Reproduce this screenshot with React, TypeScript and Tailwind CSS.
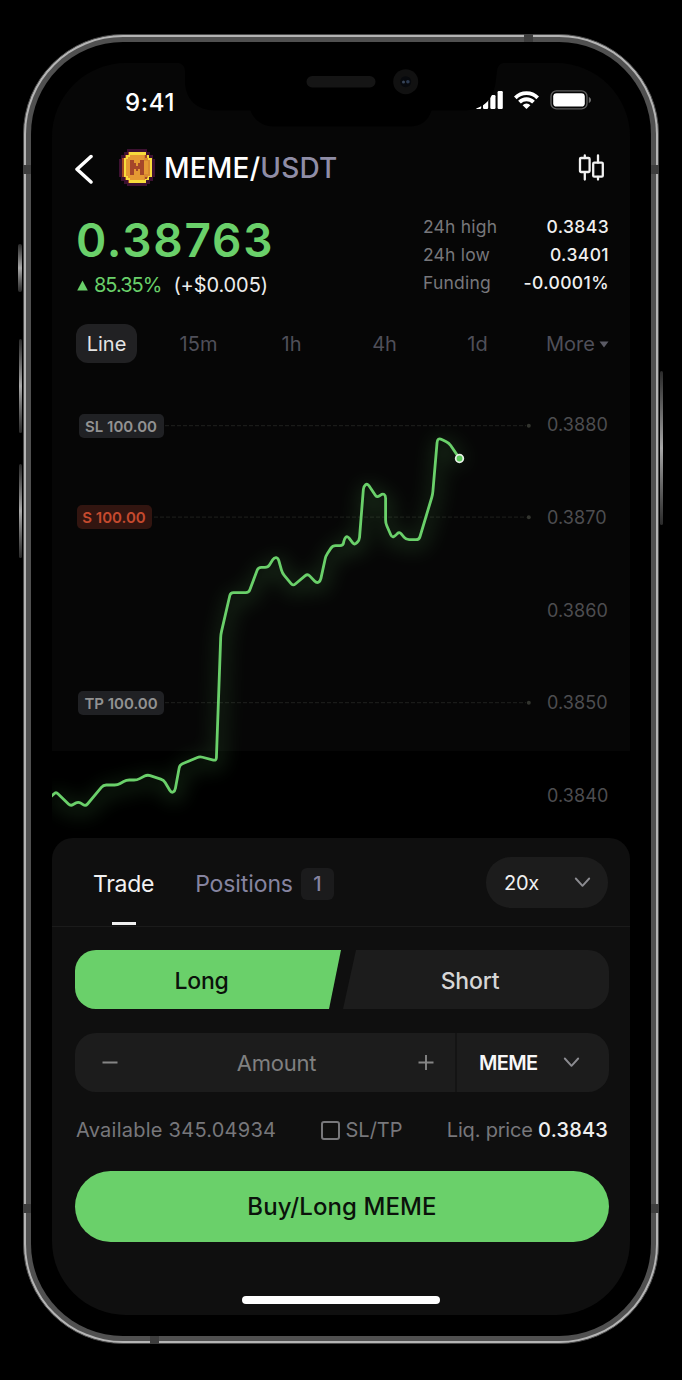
import React, { useState } from 'react'

const GREEN = '#6ad06a'

const stats = [
  { label: '24h high', value: '0.3843' },
  { label: '24h low', value: '0.3401' },
  { label: 'Funding', value: '-0.0001%' },
]

const intervals = ['15m', '1h', '4h', '1d']

const axisLabels = ['0.3880', '0.3870', '0.3860', '0.3850', '0.3840']

// chart points, x from the left edge of the screen, y from the top of the chart
const points = [
  [-2, 417], [3.7, 411.5], [18.3, 425.8], [26, 421.2], [33.3, 426], [51, 404.7], [65.3, 404.7],
  [74, 399.7], [84.7, 399.7], [95, 394.4], [111.3, 399.7], [119, 412.5], [122.6, 411], [127.4, 384.7],
  [147.3, 376.2], [164, 380.5], [168.5, 254.3], [178.2, 212.3], [196.5, 212.3], [206, 187], [215.7, 187],
  [222, 177], [225.7, 177.5], [230, 192.7], [240.7, 205.6], [255.3, 193.4], [264.3, 202.8], [268, 201],
  [273.5, 175.7], [280.3, 165.3], [290.8, 165.3], [292, 158.3], [295, 155.5], [302, 164.8], [307, 160],
  [311.3, 106], [315, 103], [324.7, 117.4], [330.3, 113.2], [333.3, 115], [333.3, 142.7], [339.5, 157],
  [342.5, 156], [347, 151.3], [353.8, 159.3], [366.8, 159.3], [380.3, 114.3], [385, 59.5], [387.3, 58],
  [396.7, 62.7], [407.3, 78.3],
]

// polyline with softened corners
function linePath(pts, radius = 3) {
  let d = `M${pts[0][0]} ${pts[0][1]}`
  for (let i = 1; i < pts.length - 1; i++) {
    const [x, y] = pts[i]
    const [px, py] = pts[i - 1]
    const [nx, ny] = pts[i + 1]
    const a = Math.hypot(px - x, py - y)
    const b = Math.hypot(nx - x, ny - y)
    const ra = Math.min(radius, a / 2) / a
    const rb = Math.min(radius, b / 2) / b
    d += `L${x + (px - x) * ra} ${y + (py - y) * ra}Q${x} ${y} ${x + (nx - x) * rb} ${y + (ny - y) * rb}`
  }
  const last = pts[pts.length - 1]
  return d + `L${last[0]} ${last[1]}`
}

function Chevron() {
  return (
    <svg className="shrink-0" width="17" height="11" viewBox="0 0 17 11" fill="none" stroke="#8b8b90" strokeWidth="1.9" strokeLinecap="round" strokeLinejoin="round">
      <path d="M1.8 1.5L8.5 8.8L15.2 1.5" />
    </svg>
  )
}

function Coin() {
  return (
    <svg width="36" height="37" viewBox="0 0 36 37">
      <path fill="#3c1131" d="M8 0H28V3H31V6H34V10H36V28H34V32H31V35H28V37H8V35H5V32H2V28H0V10H2V6H5V3H8Z" />
      <path fill="#a44a22" d="M9 3H27V6H30V9H33V28H30V31H27V34H9V31H6V28H3V9H6V6H9Z" />
      <path fill="#f7dc3c" d="M10 3H27V6H30V9H33V28H30V31H27V34H10V31H7V28H5V9H7V6H10Z" />
      <path fill="#d98a30" d="M11 6H26V9H29V11H31V27H29V29H26V31H11V29H9V27H7V10H9V8H11Z" />
      <path fill="#e59a33" d="M11 6H25V31H11V29H9V27H7V10H9V8H11Z" />
      <path fill="#e59a33" d="M25 12H29V25H25Z" />
      <path fill="#a5472a" d="M11 11H15V14H17V17H19V14H21V11H25V26H21V20H19V22H17V20H15V26H11Z" />
      <path fill="#a5472a" d="M26 6H28V9H26ZM26 28H28V30H26Z" />
    </svg>
  )
}

function StatusBar() {
  return (
    <div className="flex h-[77px] shrink-0 justify-between pl-[73px] pr-[39px] pt-[24px]">
      <span className="h-[30px] text-[24px] font-medium leading-[31px] tracking-[0.7px] text-white">9:41</span>
      <div className="flex h-[26px] items-center gap-[11px]">
        <svg width="27" height="18" viewBox="0 0 27 18" fill="#fff">
          <rect x="0" y="12" width="5.2" height="6" rx="1.2" />
          <rect x="7" y="8" width="5.2" height="10" rx="1.2" />
          <rect x="14.3" y="4" width="5.2" height="14" rx="1.2" />
          <rect x="21.6" y="0" width="5.2" height="18" rx="1.2" />
        </svg>
        <svg width="25" height="18" viewBox="0 0 25 18" fill="none" stroke="#fff" strokeWidth="3.8">
          <path d="M1.3 6.8A15.8 15.8 0 0 1 23.7 6.8" />
          <path d="M5.5 11.2A9.8 9.8 0 0 1 19.5 11.2" />
          <path d="M8.6 14.2A5.4 5.4 0 0 1 16.4 14.2L12.5 18Z" fill="#fff" stroke="none" />
        </svg>
        <svg width="41" height="20" viewBox="0 0 41 20">
          <rect x="1" y="0.9" width="36" height="18" rx="5.5" fill="none" stroke="#5c5c5c" strokeWidth="1.4" />
          <rect x="3.2" y="3.2" width="31.6" height="13.4" rx="3.4" fill="#fff" />
          <path d="M38.8 7V13C40.2 12.4 41 11.3 41 10S40.2 7.6 38.8 7Z" fill="#6b6b6b" />
        </svg>
      </div>
    </div>
  )
}

function Notch() {
  return (
    <svg className="pointer-events-none absolute left-0 top-0" width="578" height="66" viewBox="0 0 578 66">
      <path fill="#000" d="M127 0C131 1 133 4 133 9V20C134 36 144 47.5 164 47.5H198.500C201 55 209 63.500 222 63.500H357C369 63.500 376 58 379.500 47.500H410C430 47.500 441 38 443.500 20L445 8C445.500 4 447 1 451 0Z" />
      <rect x="254.500" y="13" width="69" height="11.500" rx="5.700" fill="#151515" />
      <circle cx="353.700" cy="18.700" r="12.500" fill="#111111" />
      <circle cx="353.700" cy="18.700" r="5.500" fill="#07090d" />
      <circle cx="351.500" cy="18.900" r="1.500" fill="#39465a" />
      <circle cx="355.900" cy="18.700" r="1.800" fill="#2c3a50" />
    </svg>
  )
}

function Header() {
  return (
    <div className="flex h-[56px] shrink-0 items-center pl-[22px] pr-[25px]">
      <svg width="19" height="31" viewBox="0 0 19 31" fill="none" stroke="#fff" strokeWidth="3.5" strokeLinecap="round" strokeLinejoin="round">
        <path d="M17 3.500L3 16.300L17 29" />
      </svg>
      <div className="ml-[26px] mt-[-1px]"><Coin /></div>
      <h1 className="ml-[9px] text-[28px] font-medium leading-[34px] tracking-[0.2px] text-white">
        MEME/<span className="text-[#8f8da6]">USDT</span>
      </h1>
      <svg className="ml-auto" width="27" height="28" viewBox="0 0 27 28" fill="none" stroke="#f2f2f2" strokeWidth="2.300" strokeLinecap="round">
        <rect x="2" y="4" width="9.600" height="14" rx="1" />
        <path d="M6.800 1.500V4M6.800 18.500V25.500" />
        <rect x="15.200" y="8.700" width="9.600" height="14" rx="1" />
        <path d="M20 1.500V8.500M20 23V25.500" />
      </svg>
    </div>
  )
}

function Price() {
  return (
    <div className="flex h-[128px] shrink-0 justify-between pl-[24px] pr-[21px] pt-[16px]">
      <div>
        <div className="text-[46px] font-semibold leading-[56px] tracking-[1.8px] text-[#6ad06a]">0.38763</div>
        <div className="flex h-[34px] items-center pl-[1px] text-[20px] leading-[34px]">
          <svg width="11" height="11" viewBox="0 0 11 11"><path d="M5.500 0.500L10.800 10.500H0.200Z" fill={GREEN} /></svg>
          <span className="ml-[6px] tracking-[-1px] text-[#6ad06a]">85.35%</span>
          <span className="ml-[12px] tracking-[-0.1px] text-[#ececec]">(+$0.005)</span>
        </div>
      </div>
      <dl className="mt-[1px] w-[186px] text-[17.500px] leading-[28px]">
        {stats.map(s => (
          <div key={s.label} className="flex justify-between">
            <dt className="tracking-[0.2px] text-[#77777b]">{s.label}</dt>
            <dd className="font-medium tracking-[0.4px] text-[#f0f0f0]">{s.value}</dd>
          </div>
        ))}
      </dl>
    </div>
  )
}

function Intervals() {
  return (
    <div className="flex h-[39px] shrink-0 items-center pl-[24px] text-[20px] text-[#4f4f59]">
      <button className="mr-[15px] h-[39px] w-[61px] rounded-[12px] bg-[#212123] text-[#e4e4e4]">Line</button>
      {intervals.map(i => <button key={i} className="w-[93px]">{i}</button>)}
      <button className="ml-[22px] flex items-center gap-[4px]">
        More
        <svg width="10" height="8" viewBox="0 0 10 8"><path d="M0.500 1.500H9.500L5 7.500Z" fill="#5a5a64" /></svg>
      </button>
    </div>
  )
}

function Chart() {
  const d = linePath(points)
  return (
    <div className="relative flex h-[458px] shrink-0 justify-end">
      <svg className="absolute left-0 top-0" width="578" height="458" viewBox="0 0 578 458" fill="none">
        <defs>
          <filter id="glow" x="-20%" y="-20%" width="140%" height="140%">
            <feGaussianBlur stdDeviation="10" />
          </filter>
        </defs>
        <g stroke="#1a1b19" strokeWidth="1.300" strokeDasharray="4 2">
          <path d="M113 45.700H474" />
          <path d="M102 137.200H474" />
          <path d="M113 322.700H474" />
        </g>
        <g fill="#33352f">
          <circle cx="476.800" cy="45.700" r="2" />
          <circle cx="476.800" cy="137.200" r="2" />
          <circle cx="476.800" cy="322.700" r="2" />
        </g>
        <path d={d} transform="translate(2 5)" stroke={GREEN} strokeWidth="8" opacity="0.24" filter="url(#glow)" />
        <path d={d} transform="translate(0.300 0.300)" stroke={GREEN} strokeWidth="2.800" />
        <circle cx="407.500" cy="78.500" r="3.800" fill="#5cc95c" stroke="#e6f0e6" strokeWidth="1.800" />
      </svg>
      <span className="absolute left-[26.500px] top-[34px] h-[24px] w-[85px] rounded-[5px] bg-[#202124] text-center text-[15px] font-semibold leading-[25px] text-[#929292]">SL 100.00</span>
      <span className="absolute left-[24.500px] top-[125px] h-[24px] w-[75px] rounded-[5px] bg-[#321510] text-center text-[15px] font-semibold leading-[25px] text-[#c54a2e]">S 100.00</span>
      <span className="absolute left-[26px] top-[311px] h-[24px] w-[86px] rounded-[5px] bg-[#202124] text-center text-[15px] font-semibold leading-[25px] text-[#929292]">TP 100.00</span>
      <div className="mt-[-2px] flex w-[83px] flex-col text-[18px] tracking-[0.1px] text-[#4d4d50]">
        {axisLabels.map(l => <span key={l} className="h-[92.800px] leading-[93px]">{l}</span>)}
      </div>
    </div>
  )
}

function TradePanel() {
  const [sltp, setSltp] = useState(false)
  return (
    <div className="flex flex-1 flex-col rounded-t-[21px] bg-[#0f0f0f]">
      <div className="flex h-[89px] items-start border-b border-[#1b1b1b] pl-[41px] pr-[22px] text-[23px]">
        <button className="flex h-[88px] flex-col items-center text-[#f2f2f2]">
          <span className="mt-[29px] h-[34px] leading-[34px] tracking-[-0.3px]">Trade</span>
          <span className="mt-[21px] h-[3px] w-[24px] bg-[#f0f0f0]" />
        </button>
        <button className="ml-[41px] mt-[29px] flex h-[34px] items-center tracking-[-0.1px] text-[#8684a0]">
          Positions
          <span className="ml-[8px] h-[32px] w-[33px] rounded-[6px] bg-[#1b1b1c] text-[20px] font-medium leading-[32px]">1</span>
        </button>
        <button className="ml-auto mt-[19px] flex h-[51px] w-[122px] items-center justify-between rounded-[25px] bg-[#1c1c1c] pl-[18px] pr-[17px] text-[20px] tracking-[-0.3px] text-[#f0f0f0]">
          20x
          <Chevron />
        </button>
      </div>
      <div className="mt-[23px] flex h-[59px] justify-between pl-[23px] pr-[21px] text-[23px] font-medium tracking-[-0.2px]">
        <button className="w-[266px] rounded-l-[21px] bg-[#6ad06a] pr-[13px] pt-[3px] text-[#0b120b] [clip-path:polygon(0_0,100%_0,254px_100%,0_100%)]">Long</button>
        <button className="w-[266px] rounded-r-[21px] bg-[#1c1c1c] pr-[12px] pt-[3px] text-[#d6d6d6] [clip-path:polygon(13px_0,100%_0,100%_100%,0_100%)]">Short</button>
      </div>
      <div className="ml-[23px] mr-[21px] mt-[24px] flex h-[59px] overflow-hidden rounded-[21px] bg-[#1c1c1c]">
        <div className="flex w-[382px] items-center justify-between border-r-2 border-[#141414] pl-[27px] pr-[21px]">
          <svg width="16" height="16" viewBox="0 0 16 16" stroke="#858585" strokeWidth="2.200"><path d="M0.500 7.500H15.500" /></svg>
          <span className="ml-[17px] pt-[1px] text-[22px] tracking-[-0.2px] text-[#808080]">Amount</span>
          <svg width="16" height="16" viewBox="0 0 16 16" stroke="#858585" strokeWidth="1.900"><path d="M0.500 7.500H15.500M8 0V15" /></svg>
        </div>
        <button className="flex flex-1 items-center justify-between pl-[22px] pr-[29px] text-[20px] font-semibold tracking-[-0.7px] text-[#f7f7f7]">
          MEME
          <Chevron />
        </button>
      </div>
      <div className="mt-[25px] flex h-[26px] items-center justify-between pl-[24px] pr-[22px] text-[20px] text-[#77777b]">
        <span className="tracking-[0.250px]">Available 345.04934</span>
        <button className="flex items-center gap-[6px]" onClick={() => setSltp(!sltp)}>
          <span className={sltp ? 'size-[19px] rounded-[3px] border-2 border-[#77777b] bg-[#77777b]' : 'size-[19px] rounded-[3px] border-2 border-[#77777b]'} />
          SL/TP
        </button>
        <span className="tracking-[-0.200px]">Liq. price <span className="font-medium tracking-[0.200px] text-[#f0f0f0]">0.3843</span></span>
      </div>
      <button className="ml-[23px] mr-[21px] mt-[28px] h-[71px] shrink-0 rounded-full bg-[#6ad06a] text-[24px] font-medium tracking-[0.1px] text-[#0b120b]">Buy/Long MEME</button>
      <div className="mt-[54px] h-[8px] w-[198px] self-center rounded-full bg-white" />
    </div>
  )
}

function SideButton({ className }) {
  return <div className={'absolute rounded-[2px] bg-linear-to-b from-[#2a2a2a] via-[#a8a8a8] to-[#2a2a2a] ' + className} />
}

export default function App() {
  return (
    <div className="flex h-[1380px] w-[682px] bg-black pl-[23px] pt-[34px] font-['Inter',sans-serif]">
      <div className="relative h-[1310px] w-[636px] rounded-[100px] border border-[#4a4a4a] bg-[#b4b4b4] p-[2px]">
        <SideButton className="left-[-6px] top-[209px] h-[48px] w-[4px]" />
        <SideButton className="left-[-5px] top-[304px] h-[94px] w-[3px]" />
        <SideButton className="left-[-5px] top-[429px] h-[94px] w-[3px]" />
        <SideButton className="right-[-5px] top-[336px] h-[154px] w-[3px]" />
        <div className="h-full rounded-[97px] bg-[#505050] p-[5px]">
          <div className="h-full rounded-[92px] bg-black pl-[21px] pt-[21px]">
            <div className="relative flex h-[1252px] w-[578px] flex-col overflow-hidden rounded-[74px] bg-[linear-gradient(#060606_688px,#000_688px)]">
              <StatusBar />
              <Header />
              <Price />
              <Intervals />
              <div className="h-[17px] shrink-0" />
              <Chart />
              <TradePanel />
              <Notch />
            </div>
          </div>
        </div>
        {/* antenna bands */}
        <div className="absolute left-[-1px] top-[130px] h-[9px] w-[8px] bg-[#3d3d3d]" />
        <div className="absolute right-[-1px] top-[130px] h-[9px] w-[8px] bg-[#3d3d3d]" />
        <div className="absolute left-[-1px] top-[1169px] h-[9px] w-[8px] bg-[#3d3d3d]" />
        <div className="absolute right-[-1px] top-[1169px] h-[9px] w-[8px] bg-[#3d3d3d]" />
        <div className="absolute left-[500px] top-[-1px] h-[8px] w-[9px] bg-[#3d3d3d]" />
        <div className="absolute bottom-[-1px] left-[126px] h-[8px] w-[9px] bg-[#3d3d3d]" />
      </div>
    </div>
  )
}
